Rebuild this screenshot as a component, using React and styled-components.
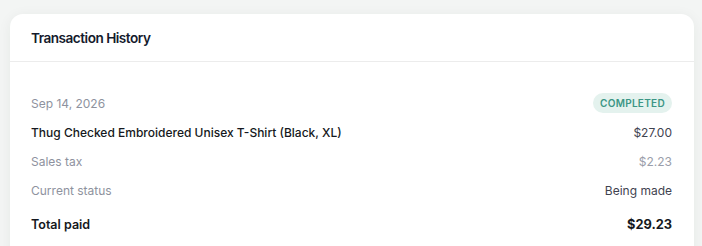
import React from 'react';
import styled, { createGlobalStyle } from 'styled-components';

const GlobalStyle = createGlobalStyle`
  html, body {
    margin: 0;
    background: #f3f5f4;
    font-family: Inter, "Liberation Sans", sans-serif;
    -webkit-font-smoothing: antialiased;
  }
  #root {
    height: 246px;
    overflow: hidden;
  }
`;

const Page = styled.div`
  padding: 14px 8px 0 10px;
`;

const Card = styled.section`
  background: #fff;
  border-radius: 13px;
  box-shadow: 0 2px 14px rgba(30, 50, 40, 0.06);
  min-height: 260px;
`;

const CardHeader = styled.header`
  height: 47px;
  display: flex;
  align-items: center;
  padding: 0 21px;
  border-bottom: 1px solid #ececec;
`;

const Title = styled.h2`
  margin: 0;
  font-size: 13.6px;
  font-weight: 600;
  letter-spacing: -0.5px;
  color: #141a2c;
`;

const CardBody = styled.div`
  display: flex;
  flex-direction: column;
  gap: 9px;
  padding: 31px 22px 0 21px;
`;

const Row = styled.div`
  display: flex;
  justify-content: space-between;
  align-items: center;
  height: 20px;
  margin-top: ${p => (p.$spaced ? '5px' : '0')};
`;

const Label = styled.span`
  font-size: ${p => (p.$strong ? '12.5px' : '12px')};
  font-weight: ${p => (p.$strong ? 600 : p.$dark ? 500 : 400)};
  color: ${p => (p.$dark || p.$strong ? '#151820' : '#8e929e')};
`;

const Value = styled.span`
  font-size: ${p => (p.$strong ? '12.8px' : '12px')};
  font-weight: ${p => (p.$strong ? 700 : 400)};
  color: ${p => (p.$strong ? '#151820' : p.$muted ? '#9a9eaa' : '#3f4350')};
`;

const Badge = styled.span`
  display: inline-flex;
  align-items: center;
  height: 20px;
  padding: 0 7px;
  border-radius: 10px;
  background: #e4f2ee;
  color: #3b9685;
  font-size: 10px;
  font-weight: 600;
  letter-spacing: 0.3px;
`;

export default function App() {
  return (
    <>
      <GlobalStyle />
      <Page>
        <Card>
          <CardHeader>
            <Title>Transaction History</Title>
          </CardHeader>
          <CardBody>
            <Row>
              <Label>Sep 14, 2026</Label>
              <Badge>COMPLETED</Badge>
            </Row>
            <Row>
              <Label $dark>Thug Checked Embroidered Unisex T-Shirt (Black, XL)</Label>
              <Value>$27.00</Value>
            </Row>
            <Row>
              <Label>Sales tax</Label>
              <Value $muted>$2.23</Value>
            </Row>
            <Row>
              <Label>Current status</Label>
              <Value>Being made</Value>
            </Row>
            <Row $spaced>
              <Label $strong>Total paid</Label>
              <Value $strong>$29.23</Value>
            </Row>
          </CardBody>
        </Card>
      </Page>
    </>
  );
}
